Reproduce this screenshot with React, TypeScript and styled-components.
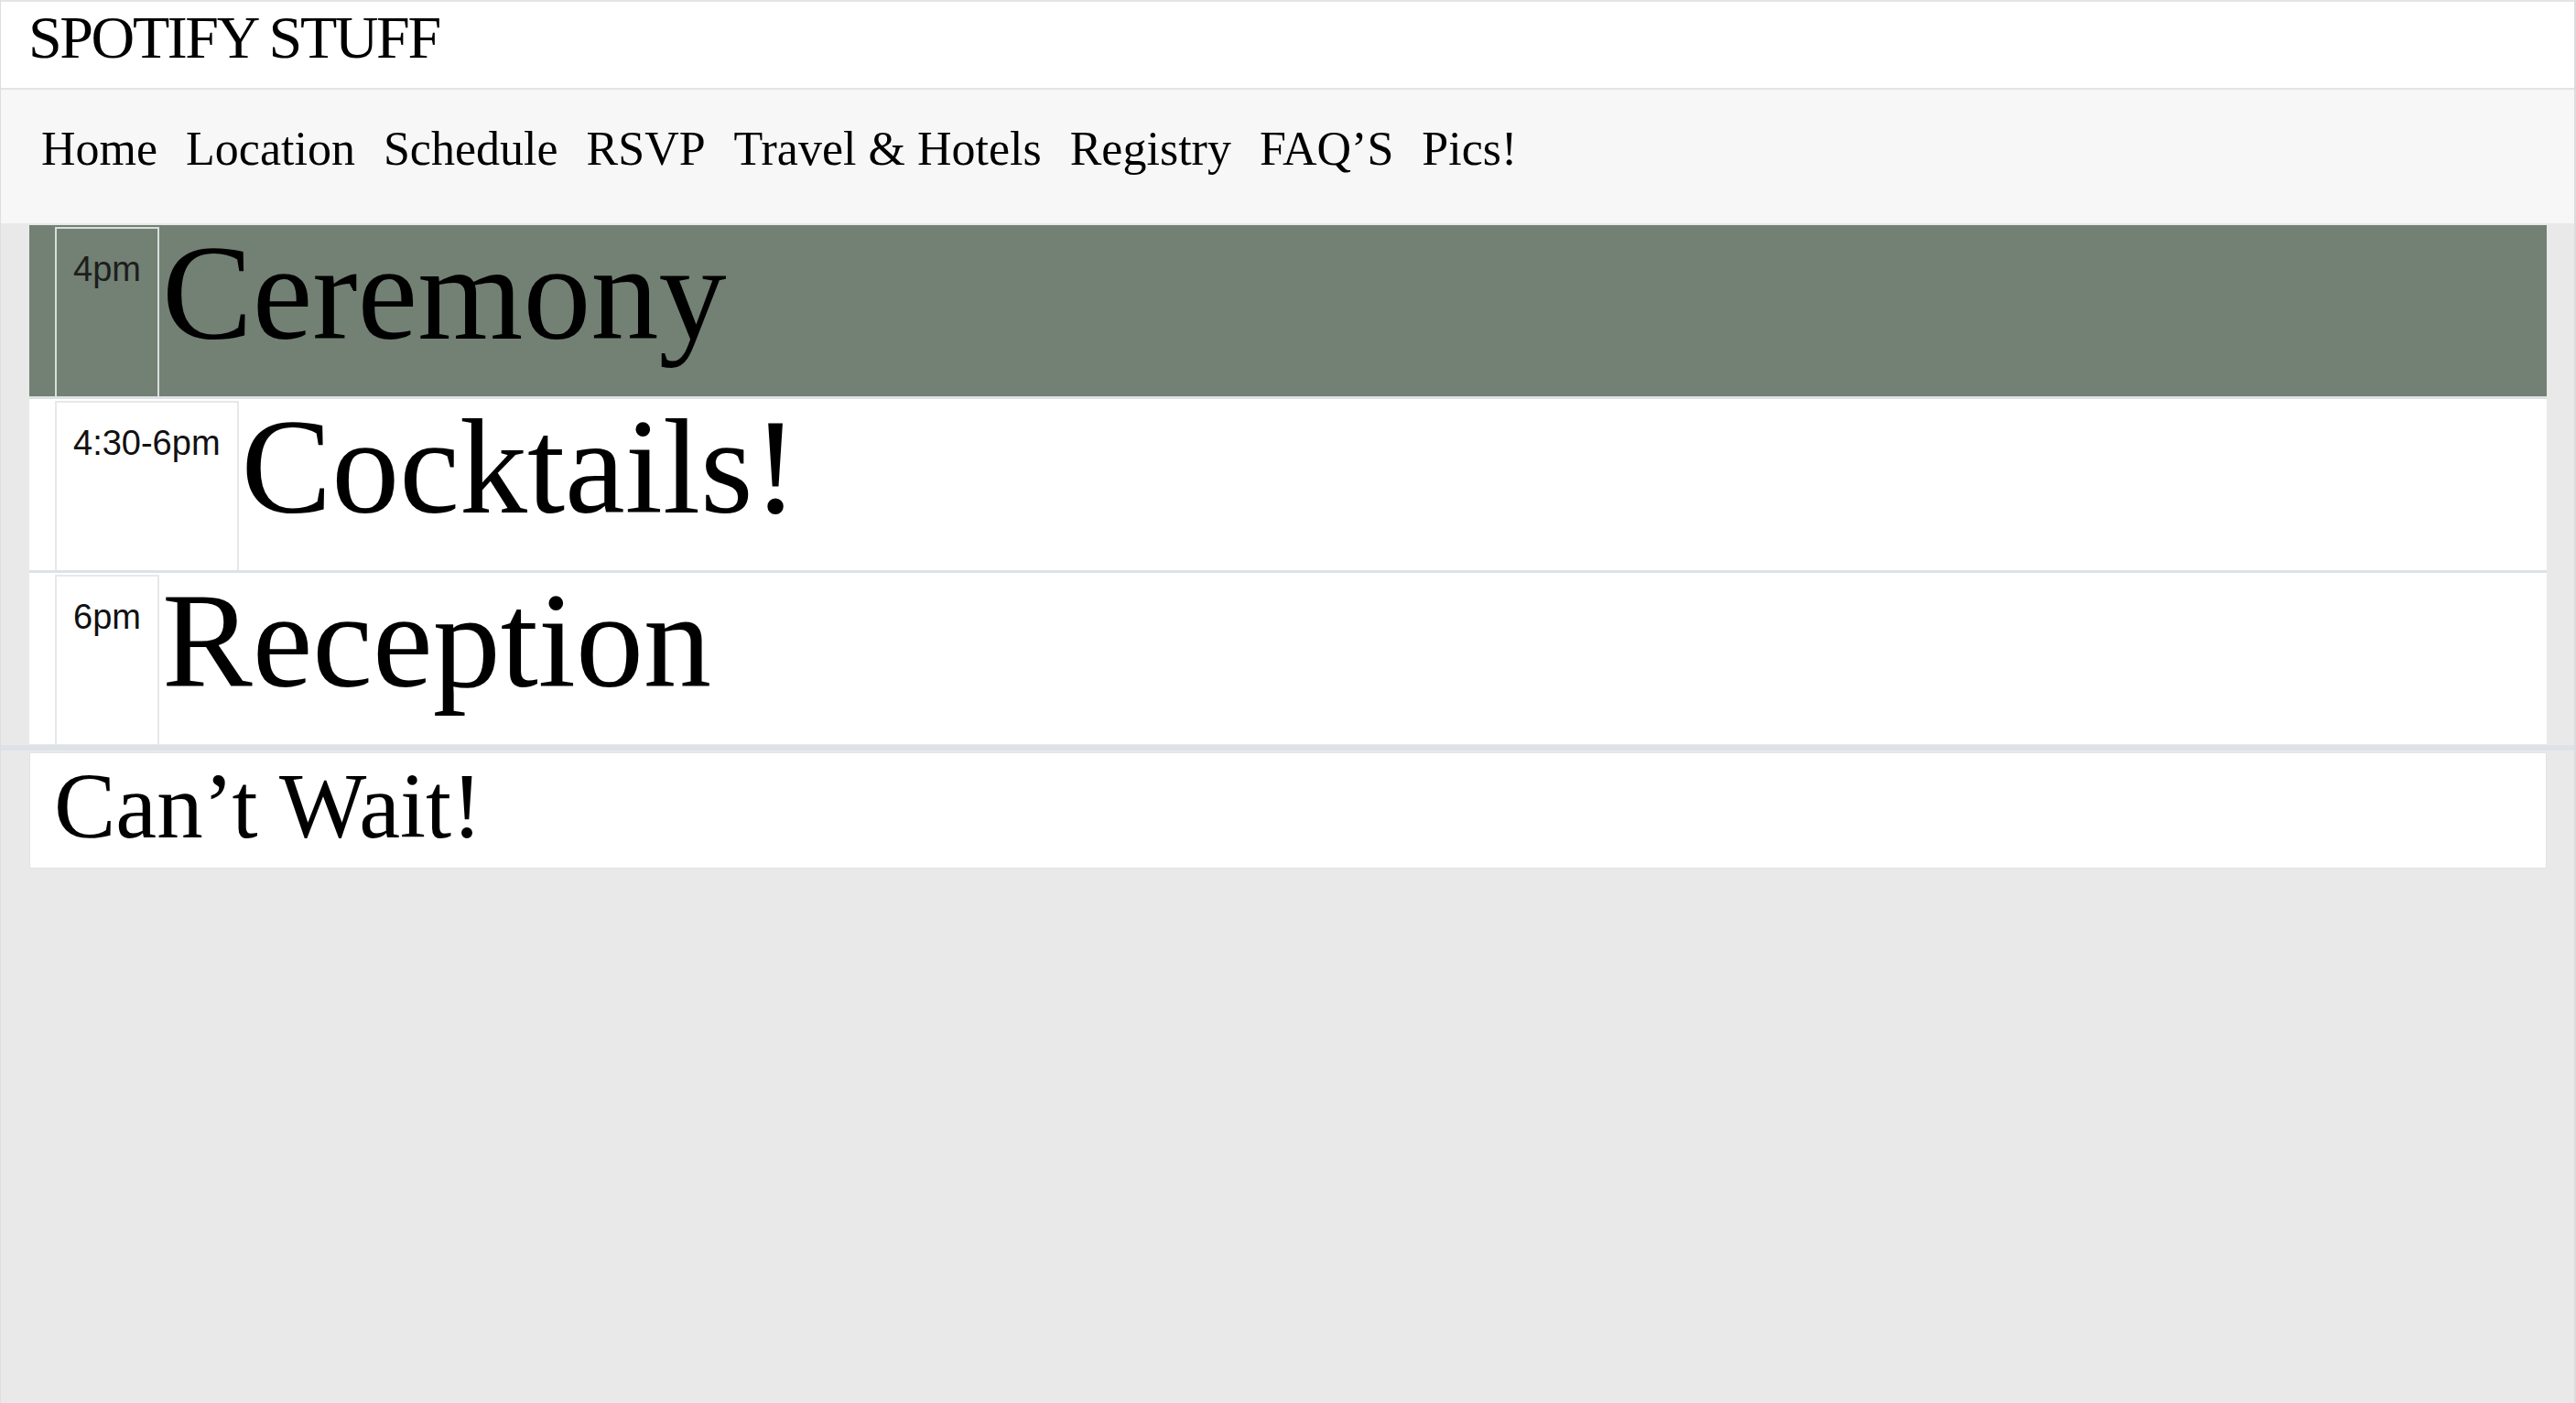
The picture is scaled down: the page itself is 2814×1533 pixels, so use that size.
import styled, { createGlobalStyle } from 'styled-components';

const GlobalStyle = createGlobalStyle`
  html, body {
    margin: 0;
    padding: 0;
    background: #e9e9e9;
  }
  * {
    box-sizing: border-box;
  }
`;

interface ScheduleItem {
  time: string;
  title: string;
  active?: boolean;
}

const navLinks = ['Home', 'Location', 'Schedule', 'RSVP', 'Travel & Hotels', 'Registry', 'FAQ’S', 'Pics!'];

const schedule: ScheduleItem[] = [
  { time: '4pm', title: 'Ceremony', active: true },
  { time: '4:30-6pm', title: 'Cocktails!' },
  { time: '6pm', title: 'Reception' },
];

const Page = styled.div`
  min-height: 100vh;
  background: #e9e9e9;
  border-left: 1px solid #dedede;
  border-right: 2px solid #dcdcdc;
  font-family: 'Liberation Serif', 'Times New Roman', serif;
  color: #000;
`;

const Header = styled.header`
  height: 98px;
  padding: 6px 30px 0;
  background: #fff;
  border-top: 2px solid #e4e4e4;
  border-bottom: 2px solid #e4e4e4;
`;

const Title = styled.h1`
  margin: 0;
  font-size: 66px;
  line-height: 66px;
  font-weight: 400;
  letter-spacing: -2.4px;
`;

const Nav = styled.nav`
  display: flex;
  align-items: center;
  gap: 31px;
  height: 146px;
  padding: 0 0 18px 44px;
  background: #f7f7f7;
`;

const NavLink = styled.a`
  font-size: 52px;
  color: #000;
  text-decoration: none;
  white-space: nowrap;
`;

const ScheduleList = styled.section`
  display: flex;
  flex-direction: column;
  gap: 3px;
  margin: 2px 30px 0 31px;
  background: #dde2e6;
`;

const Row = styled.div<{ active?: boolean }>`
  display: flex;
  align-items: stretch;
  height: 187px;
  padding: 2px 0 0 28px;
  background: ${({ active }) => (active ? '#738074' : '#fff')};
`;

const TimeCell = styled.div<{ active?: boolean }>`
  flex: none;
  padding: 23px 18px 0 18px;
  border: 2px solid ${({ active }) => (active ? '#d7dfdb' : '#e6e8ea')};
  border-bottom: none;
  font-family: 'Liberation Sans', Arial, sans-serif;
  font-size: 38px;
  color: ${({ active }) => (active ? '#1c1f1c' : '#111')};
`;

const EventTitle = styled.h2`
  margin: 0;
  padding-left: 3px;
  font-size: 148px;
  line-height: 144px;
  font-weight: 400;
  white-space: nowrap;
`;

const Footer = styled.section`
  margin-top: 1px;
  padding: 2px 30px 0 31px;
  border-top: 6px solid #dde2e8;
`;

const FooterBox = styled.div`
  height: 127px;
  padding: 0 0 0 26px;
  background: #fff;
  border: 1px solid #e3e3e3;
`;

const FooterText = styled.p`
  margin: 0;
  font-size: 101px;
  line-height: 116px;
  white-space: nowrap;
`;

export default function App() {
  return (
    <>
      <GlobalStyle />
      <Page>
        <Header>
          <Title>SPOTIFY STUFF</Title>
        </Header>
        <Nav>
          {navLinks.map((link) => (
            <NavLink key={link} href="#">
              {link}
            </NavLink>
          ))}
        </Nav>
        <ScheduleList>
          {schedule.map((item) => (
            <Row key={item.title} active={item.active}>
              <TimeCell active={item.active}>{item.time}</TimeCell>
              <EventTitle>{item.title}</EventTitle>
            </Row>
          ))}
        </ScheduleList>
        <Footer>
          <FooterBox>
            <FooterText>Can’t Wait!</FooterText>
          </FooterBox>
        </Footer>
      </Page>
    </>
  );
}
